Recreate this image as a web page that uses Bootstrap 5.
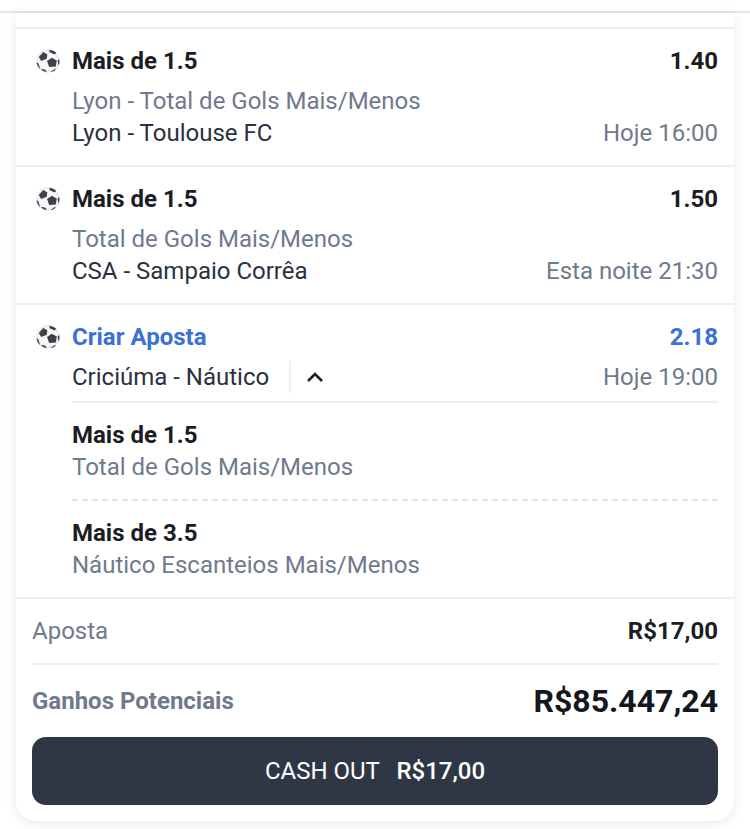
<!DOCTYPE html>
<html lang="en">
<head>
  <meta charset="UTF-8">
  <title>Cupom</title>
  <link href="https://cdn.jsdelivr.net/npm/bootstrap@5.3.3/dist/css/bootstrap.min.css" rel="stylesheet">
  <style>
    body { font-family: Roboto, "Liberation Sans", sans-serif; font-size: 24px; line-height: 32px; color: #2a3140; background: #fff; overflow: hidden; height: 829px; }
    .top-strip { height: 13px; border-bottom: 2px solid #e4e6ea; }
    .slip { margin: 0 16px; background: #fff; border-radius: 0 0 20px 20px; box-shadow: 0 2px 12px rgba(30,37,48,.1); padding-top: 14px; }
    .leg { border-top: 2px solid #eceef0; padding: 16px 16px 16px 20px; }
    .leg-icon { width: 24px; height: 24px; margin-right: 12px; margin-top: 4px; flex: none; }
    .leg-title { font-weight: 700; color: #1a1d24; }
    .leg-sub { color: #6f7a8c; }
    .leg-gap { margin-top: 8px; }
    .leg-title.create { color: #3a70d8; }
    .chev-sep { border-left: 2px solid #eceef0; height: 32px; margin-left: 20px; padding-left: 15px; }
    .inner-head { border-bottom: 2px solid #eceef0; padding-bottom: 8px; }
    .sub-a { padding: 16px 0; border-bottom: 2px dashed #dfe2e6; }
    .sub-b { padding: 16px 0 0; }
    .sum-box { border-bottom: 2px solid #eceef0; padding: 0 0 16px; }
    .sum-wrap { border-top: 2px solid #eceef0; padding: 16px 16px 0; }
    .sum-val { font-weight: 700; color: #1a1d24; }
    .gain-row { height: 72px; }
    .gain-label { font-weight: 700; color: #6f7a8c; }
    .gain-val { font-weight: 700; font-size: 32px; color: #14171c; }
    .btn-cash { background: #2f3744; color: #fff; border: 0; border-radius: 14px; height: 68px; width: 100%; font-size: 24px; display: block; }
    .btn-cash:hover { background: #2f3744; color: #fff; }
    .cash-amt { font-weight: 500; margin-left: 11px; }
    .slip-foot { height: 16px; }
  </style>
</head>
<body>
  <svg width="0" height="0" class="position-absolute">
    <symbol id="ball" viewBox="0 0 24 24">
      <circle cx="12" cy="12" r="11.7" fill="#e9ebee"/>
      <circle cx="12" cy="11.5" r="9.8" fill="#f6f7f8"/>
      <path d="M11 12 L15.8 8.8 L20.8 11.5 L19.8 17.5 L13.2 18 Z" fill="#3d4148"/>
      <path d="M2.8 8 L7.2 3 L11.3 5.3 L10.8 9.8 L5.2 12 Z" fill="#3d4148"/>
      <path d="M13.3 .7 Q17.8 1 20.3 3.8 L18.7 5.4 L13.6 3.2 Z" fill="#3d4148"/>
      <path d="M23.3 10 Q23.9 14 22.6 16.8 L21.6 11.5 Z" fill="#3d4148"/>
      <path d="M.5 13.5 L2.2 14 L3.8 19 L4 20.2 Q1 17.5 .5 13.5 Z" fill="#3d4148"/>
      <path d="M4.8 20 L9.2 20.6 L10.8 23.3 Q7.2 23 4.8 20 Z" fill="#3d4148"/>
      <path d="M14.3 23.1 L19 20 L19.8 20.7 Q17.2 23.1 14.3 23.1 Z" fill="#3d4148"/>
    </symbol>
  </svg>

  <div class="top-strip"></div>
  <div class="slip">
    <div class="leg d-flex">
      <svg class="leg-icon"><use href="#ball"/></svg>
      <div class="flex-grow-1">
        <div class="d-flex justify-content-between leg-title"><span>Mais de 1.5</span><span>1.40</span></div>
        <div class="leg-sub leg-gap">Lyon - Total de Gols Mais/Menos</div>
        <div class="d-flex justify-content-between"><span>Lyon - Toulouse FC</span><span class="leg-sub">Hoje 16:00</span></div>
      </div>
    </div>
    <div class="leg d-flex">
      <svg class="leg-icon"><use href="#ball"/></svg>
      <div class="flex-grow-1">
        <div class="d-flex justify-content-between leg-title"><span>Mais de 1.5</span><span>1.50</span></div>
        <div class="leg-sub leg-gap">Total de Gols Mais/Menos</div>
        <div class="d-flex justify-content-between"><span>CSA - Sampaio Corrêa</span><span class="leg-sub">Esta noite 21:30</span></div>
      </div>
    </div>
    <div class="leg d-flex">
      <svg class="leg-icon"><use href="#ball"/></svg>
      <div class="flex-grow-1">
        <div class="d-flex justify-content-between leg-title create"><span>Criar Aposta</span><span>2.18</span></div>
        <div class="d-flex justify-content-between align-items-center leg-gap inner-head">
          <div class="d-flex align-items-center">
            <span>Criciúma - Náutico</span>
            <span class="chev-sep d-flex align-items-center">
              <svg width="18" height="12" viewBox="0 0 18 12"><path d="M2 10 L9 3 L16 10" fill="none" stroke="#1a1d24" stroke-width="2.6"/></svg>
            </span>
          </div>
          <span class="leg-sub">Hoje 19:00</span>
        </div>
        <div class="sub-a">
          <div class="leg-title">Mais de 1.5</div>
          <div class="leg-sub">Total de Gols Mais/Menos</div>
        </div>
        <div class="sub-b">
          <div class="leg-title">Mais de 3.5</div>
          <div class="leg-sub">Náutico Escanteios Mais/Menos</div>
        </div>
      </div>
    </div>
    <div class="sum-wrap">
      <div class="d-flex justify-content-between sum-box">
        <span class="leg-sub">Aposta</span>
        <span class="sum-val">R$17,00</span>
      </div>
      <div class="d-flex justify-content-between align-items-center gain-row">
        <span class="gain-label">Ganhos Potenciais</span>
        <span class="gain-val">R$85.447,24</span>
      </div>
      <button class="btn btn-cash">CASH OUT <span class="cash-amt">R$17,00</span></button>
      <div class="slip-foot"></div>
    </div>
  </div>
  <script src="https://cdn.jsdelivr.net/npm/bootstrap@5.3.3/dist/js/bootstrap.bundle.min.js"></script>
</body>
</html>
